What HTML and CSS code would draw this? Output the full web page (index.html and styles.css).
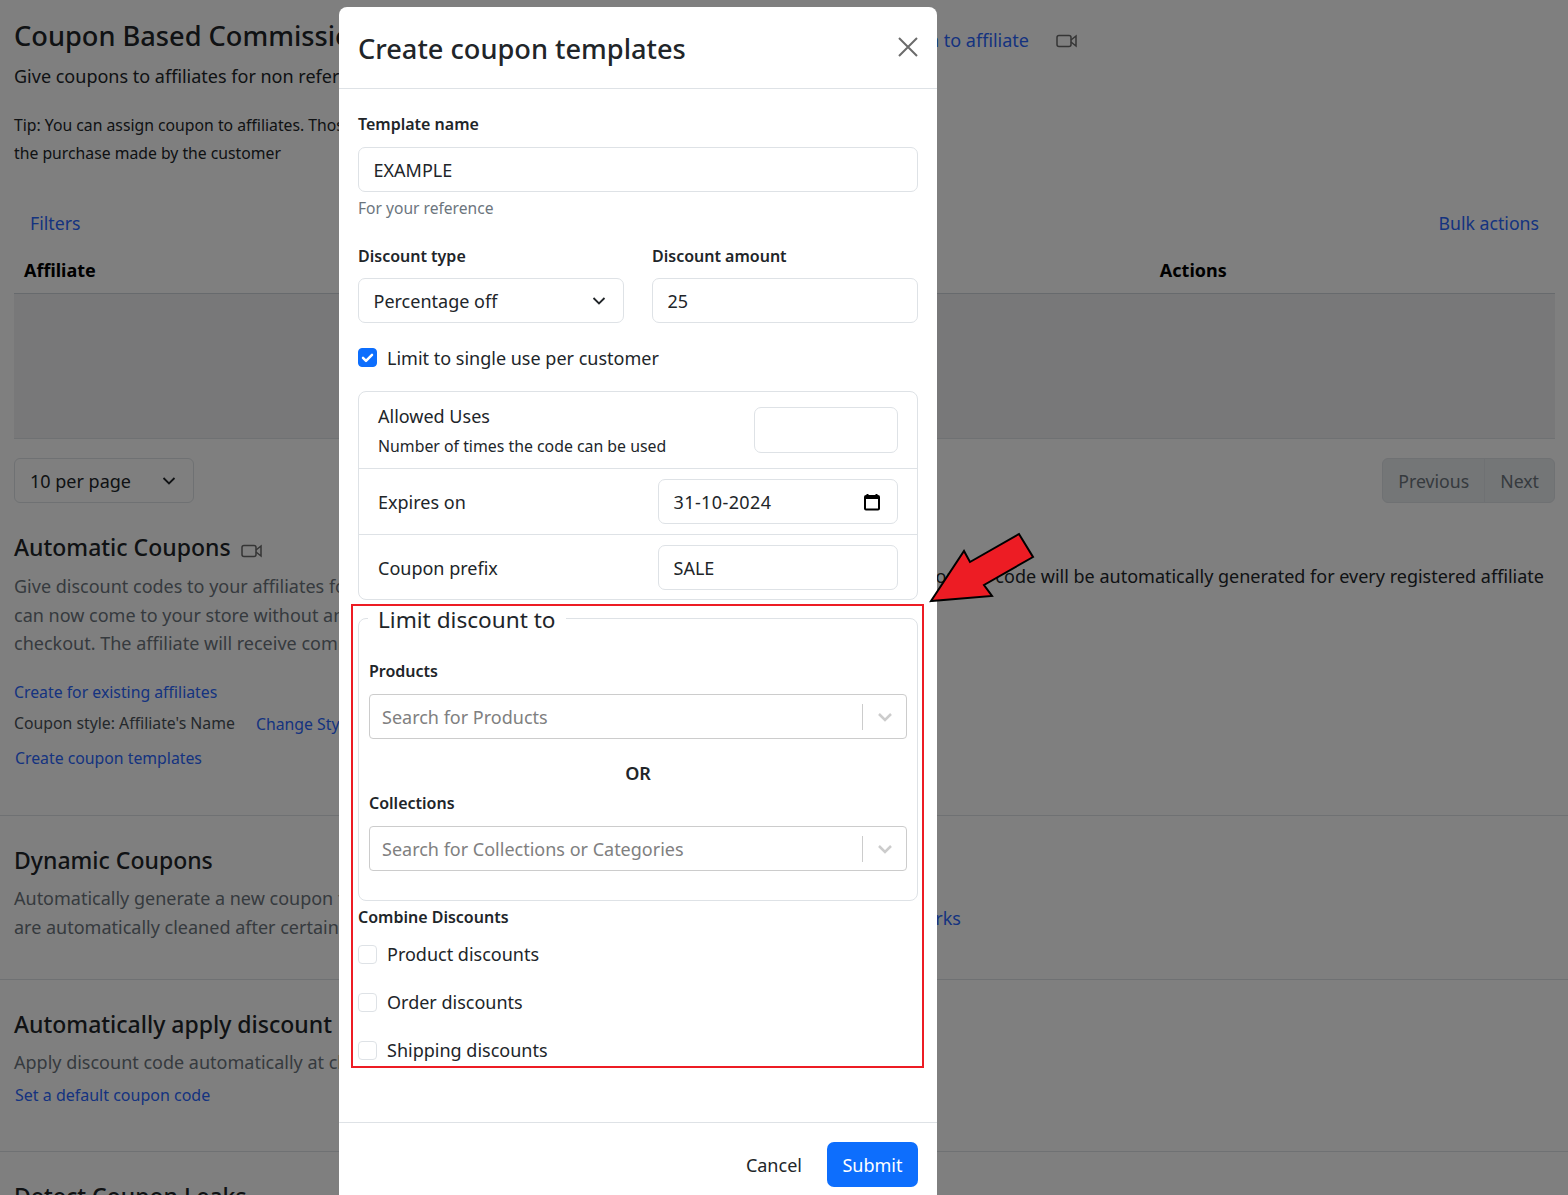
FILE: index.html
```html
<!DOCTYPE html>
<html lang="en">
<head>
<meta charset="utf-8">
<title>Coupon Based Commission</title>
<link rel="stylesheet" href="styles.css">
</head>
<body>
<div class="page">
  <header class="top">
    <div>
      <h1 class="title">Coupon Based Commission</h1>
      <p class="subtitle">Give coupons to affiliates for non referral sales</p>
      <p class="tip">Tip: You can assign coupon to affiliates. Those coupons will then track<br>the purchase made by the customer</p>
    </div>
    <div class="top-right">
      <a class="link">Assign coupon to affiliate</a>
      <svg class="cam cam-top" width="22" height="14" viewBox="0 0 22 14"><rect x="1" y="1.5" width="14" height="11" rx="2"/><path d="M15 6l5-4v10l-5-4"/></svg>
    </div>
  </header>

  <div class="bar"><a class="link">Filters</a><a class="link">Bulk actions</a></div>
  <div class="thead"><b>Affiliate</b><b class="th-actions">Actions</b></div>
  <div class="tbody"></div>
  <div class="pager-row">
    <div class="per-page">10 per page
      <svg width="14" height="8" viewBox="0 0 14 8"><path d="M1.5 1l5.500 5.500L12.500 1"/></svg>
    </div>
    <div class="pager"><span>Previous</span><span>Next</span></div>
  </div>

  <section class="sec sec-auto">
    <div class="sec-main">
      <h2 class="h2">Automatic Coupons <svg class="cam cam-inline" width="22" height="14" viewBox="0 0 22 14"><rect x="1" y="1.500" width="14" height="11" rx="2"/><path d="M15 6l5-4v10l-5-4"/></svg></h2>
      <p class="muted">Give discount codes to your affiliates for promotion. Customers<br>can now come to your store without an affiliate link and apply at<br>checkout. The affiliate will receive commission.</p>
      <a class="link small l-existing">Create for existing affiliates</a>
      <div class="style-row"><span>Coupon style: Affiliate's Name</span><a class="link small">Change Style</a></div>
      <a class="link small l-templates">Create coupon templates</a>
    </div>
    <p class="sec-side">A unique coupon code will be automatically generated for every registered affiliate</p>
  </section>

  <section class="sec sec-dyn">
    <div class="sec-main">
      <h2 class="h2">Dynamic Coupons</h2>
      <p class="muted">Automatically generate a new coupon for every customer. Coupons<br>are automatically cleaned after certain period of time.</p>
    </div>
    <a class="link side-link">How it works</a>
  </section>

  <section class="sec sec-apply">
    <h2 class="h2">Automatically apply discount</h2>
    <p class="muted">Apply discount code automatically at checkout</p>
    <a class="link small l-default">Set a default coupon code</a>
  </section>

  <section class="sec sec-leak">
    <h2 class="h2">Detect Coupon Leaks</h2>
  </section>
</div>

<div class="overlay">
  <div class="modal">
    <div class="modal-head">
      <h3 class="modal-title">Create coupon templates</h3>
      <svg class="close" width="22" height="22" viewBox="0 0 22 22"><path d="M2 2l18 18M20 2L2 20"/></svg>
    </div>
    <div class="modal-body">
      <label class="lbl">Template name</label>
      <input class="input" value="EXAMPLE">
      <div class="help">For your reference</div>

      <div class="two">
        <div>
          <label class="lbl">Discount type</label>
          <div class="input sel">Percentage off
            <svg width="14" height="8" viewBox="0 0 14 8"><path d="M1.500 1l5.500 5.500L12.500 1"/></svg>
          </div>
        </div>
        <div>
          <label class="lbl">Discount amount</label>
          <input class="input" value="25">
        </div>
      </div>

      <div class="check check-first">
        <span class="box on"><svg width="19" height="19" viewBox="0 0 19 19"><path d="M5 9.800l3 3 6-6"/></svg></span>
        <span class="check-text">Limit to single use per customer</span>
      </div>

      <div class="group">
        <div class="row row-uses">
          <div>
            <div>Allowed Uses</div>
            <div class="row-sub">Number of times the code can be used</div>
          </div>
          <input class="input in-uses">
        </div>
        <div class="row row-exp">
          <span>Expires on</span>
          <div class="input in-wide sel"><span class="date">31-10-2024</span>
            <svg class="cal" width="18" height="18" viewBox="0 0 18 18"><path d="M4.500 1v3M13.500 1v3"/><rect x="2" y="3" width="14" height="13.500" rx="1"/><path class="cal-band" d="M2 5h14"/></svg>
          </div>
        </div>
        <div class="row row-pre">
          <span>Coupon prefix</span>
          <input class="input in-wide" value="SALE">
        </div>
      </div>

      <fieldset class="limit">
        <legend class="legend">Limit discount to</legend>
        <label class="lbl lbl-prod">Products</label>
        <div class="rs">
          <span>Search for Products</span>
          <i class="rs-sep"></i>
          <svg width="16" height="10" viewBox="0 0 16 10"><path d="M2 2l6 6 6-6"/></svg>
        </div>
        <div class="or">OR</div>
        <label class="lbl lbl-coll">Collections</label>
        <div class="rs">
          <span>Search for Collections or Categories</span>
          <i class="rs-sep"></i>
          <svg width="16" height="10" viewBox="0 0 16 10"><path d="M2 2l6 6 6-6"/></svg>
        </div>
      </fieldset>

      <div class="lbl lbl-comb">Combine Discounts</div>
      <div class="check"><span class="box"></span><span>Product discounts</span></div>
      <div class="check"><span class="box"></span><span>Order discounts</span></div>
      <div class="check"><span class="box"></span><span>Shipping discounts</span></div>
    </div>
    <div class="modal-foot">
      <span class="cancel">Cancel</span>
      <span class="submit">Submit</span>
    </div>
  </div>
</div>

<div class="highlight"></div>
<svg class="arrow" width="110" height="76" viewBox="928 532 110 76"><polygon points="931,601 964,551 970,562 1019,534 1033,557 984,585 992,596"/></svg>
</body>
</html>
```

FILE: styles.css
```css
* { box-sizing: border-box; }
html, body { margin: 0; padding: 0; height: 1195px; overflow: hidden; }
body { font-family: "Noto Sans", "Open Sans", sans-serif; font-size: 18px; color: #212529; background: #fff; position: relative; }
h1, h2, h3, p { margin: 0; }
.page { width: 1568px; }
.link { color: #2a66ff; text-decoration: none; }
.small { font-size: 15.800px; }

.top { display: flex; justify-content: space-between; padding: 17px 14px 0; height: 203px; }
.title { font-size: 27.200px; font-weight: 500; line-height: 38px; white-space: nowrap; }
.subtitle { margin-top: 8px; line-height: 26px; white-space: nowrap; }
.tip { margin-top: 22px; font-size: 15.750px; line-height: 28px; white-space: nowrap; }
.top-right { display: flex; align-items: center; gap: 27px; height: 46px; padding-right: 476px; }
.cam { fill: none; stroke: #6a6a6a; stroke-width: 1.500; }
.cam-top { margin-top: 2px; }
.cam-inline { vertical-align: -2px; margin-left: 4px; }

.bar { display: flex; justify-content: space-between; padding: 7px 15px 0 16px; height: 42px; line-height: 26px; margin: 0 14px; font-size: 17.700px; }
.thead { display: flex; height: 49px; padding: 2px 0 0 10px; align-items: center; margin: 0 13px 0 14px; border-bottom: 1px solid #ced4da; color: #000; }
.th-actions { margin-left: 1064px; }
.tbody { height: 145px; margin: 0 13px 0 14px; background: #f1f1f2; border-bottom: 1px solid #dee2e6; }
.pager-row { display: flex; justify-content: space-between; margin: 19px 13px 0 14px; height: 45px; }
.per-page { width: 180px; border: 1px solid #dee2e6; border-radius: 6px; display: flex; align-items: center; justify-content: space-between; padding: 0 17px 0 15px; }
.per-page svg, .sel svg { fill: none; stroke: #212529; stroke-width: 1.800; }
.pager { display: flex; background: #e9ecef; border: 1px solid #dee2e6; border-radius: 6px; color: #6c757d; font-size: 17.700px; }
.pager span { display: flex; align-items: center; padding: 0 15px; }
.pager span + span { border-left: 1px solid #dee2e6; }

.sec { padding: 0 14px; border-top: 1px solid #dee2e6; }
.sec-auto { border-top: 0; display: flex; justify-content: space-between; height: 312px; padding-top: 28px; }
.h2 { font-size: 23px; font-weight: 500; line-height: 32px; white-space: nowrap; }
.muted { color: #6c757d; line-height: 28.500px; white-space: nowrap; }
.sec-main { width: 700px; }
.sec-auto .muted { margin-top: 9px; }
.l-existing { display: block; margin-top: 20px; line-height: 28px; }
.style-row { display: flex; gap: 21px; font-size: 15.800px; color: #495057; margin-top: 3px; line-height: 30px; }
.style-row > span { margin-top: -1px; }
.l-templates { display: block; margin-top: 5px; margin-left: 1px; line-height: 28px; }
.sec-side { margin-top: 31px; padding-right: 10px; line-height: 28px; white-space: nowrap; }
.sec-dyn { display: flex; justify-content: space-between; height: 164px; padding-top: 28px; }
.sec-dyn .muted { margin-top: 8px; }
.side-link { margin: 60px 593px 0 0; height: 28px; line-height: 28px; white-space: nowrap; }
.sec-apply { height: 172px; padding-top: 28px; }
.sec-apply .muted { margin-top: 8px; }
.l-default { display: block; margin: 4px 0 0 1px; line-height: 28px; font-size: 16px; }
.sec-leak { padding-top: 28px; }

.overlay { position: absolute; inset: 0; background: rgba(0, 0, 0, .5); }
.modal { margin: 7px 0 0 339px; width: 598px; background: #fff; border-radius: 8px; color: #212529; }
.modal-head { height: 82px; border-bottom: 1px solid #dee2e6; display: flex; align-items: center; justify-content: space-between; padding: 0 19px; }
.modal-title { font-size: 27.200px; font-weight: 500; line-height: 38px; margin-top: 2px; }
.close { fill: none; stroke: #6b6b6b; stroke-width: 2; margin-top: -2px; margin-right: -1px; }
.modal-body { height: 1033px; padding: 22px 19px 0; }
.lbl { display: block; font-weight: 600; font-size: 16px; line-height: 26px; }
.input { display: block; width: 100%; height: 45px; padding: 0 14.500px; border: 1px solid #dee2e6; border-radius: 7px; font: inherit; color: #212529; background: #fff; margin-top: 10px; outline: 0; }
.help { font-size: 15.600px; color: #6c757d; line-height: 26px; margin-top: 3px; }
.two { display: grid; grid-template-columns: 266px 266px; gap: 28px; margin-top: 22px; }
.two .input { margin-top: 9px; }
.sel { display: flex; align-items: center; justify-content: space-between; }
.sel svg { margin-right: 3px; }
.check { display: flex; align-items: center; gap: 10px; height: 28px; margin-top: 20px; }
.check-first { margin-top: 20px; }
.check-text { padding-top: 2px; }
.lbl-comb + .check { margin-top: 10px; }
.box { width: 19px; height: 19px; border: 1px solid #dee2e6; border-radius: 4px; flex: none; background: #fff; }
.box.on { background: #0d6efd; border-color: #0d6efd; position: relative; }
.box.on svg { display: block; margin: -1px; fill: none; stroke: #fff; stroke-width: 2.500; stroke-linecap: round; stroke-linejoin: round; }

.group { margin-top: 20px; border: 1px solid #dee2e6; border-radius: 8px; }
.row { display: flex; justify-content: space-between; align-items: center; padding: 0 19px; }
.row + .row { border-top: 1px solid #dee2e6; }
.row-uses { height: 76px; }
.row-exp { height: 66px; }
.row-pre { height: 65px; }
.row-pre > span { padding-top: 2px; }
.row .input { margin-top: 0; }
.row-pre .input { padding-top: 2px; }
.row-sub { font-size: 15.850px; margin-top: 5px; line-height: 26px; }
.row-uses > div { line-height: 24px; padding-top: 3px; }
.in-uses { width: 144px; height: 46px; }
.in-wide { width: 240px; }
.date { letter-spacing: .4px; }
.sel .cal { margin-right: 2px; fill: none; stroke: #000; stroke-width: 2; }
.cal-band { stroke-width: 2; }

.limit { margin: 1px 0 0; padding: 0 10px; border: 1px solid #dee2e6; border-radius: 8px; height: 300px; min-width: 0; }
.legend { font-size: 22.600px; line-height: 30px; padding: 4px 10px 0; margin-left: -1px; width: auto; }
.lbl-prod { margin-top: 23px; }
.rs { display: flex; align-items: center; height: 45px; margin-top: 10px; border: 1px solid #ccc; border-radius: 4px; padding: 0 13px 0 12px; color: #808080; }
.rs span { flex: 1; }
.rs-sep { width: 1px; height: 26px; background: #ccc; margin-right: 14px; }
.rs svg { fill: none; stroke: #ccc; stroke-width: 2.500; }
.or { text-align: center; font-weight: 600; line-height: 26px; margin-top: 21px; font-size: 18px; }
.lbl-coll { margin-top: 4px; }
.lbl-comb { margin-top: 3px; }

.modal-foot { border-top: 1px solid #dee2e6; display: flex; justify-content: flex-end; align-items: center; gap: 25px; padding: 19px 19px; }
.cancel { color: #212529; }
.submit { background: #0d6efd; color: #fff; border-radius: 7px; height: 45px; padding: 0 15.500px; display: flex; align-items: center; }

.highlight { position: absolute; left: 351px; top: 604px; width: 573px; height: 464px; border: 2px solid #ed1c24; }
.arrow { position: absolute; left: 928px; top: 532px; }
.arrow polygon { fill: #ed1c24; stroke: #000; stroke-width: 2; }
```
